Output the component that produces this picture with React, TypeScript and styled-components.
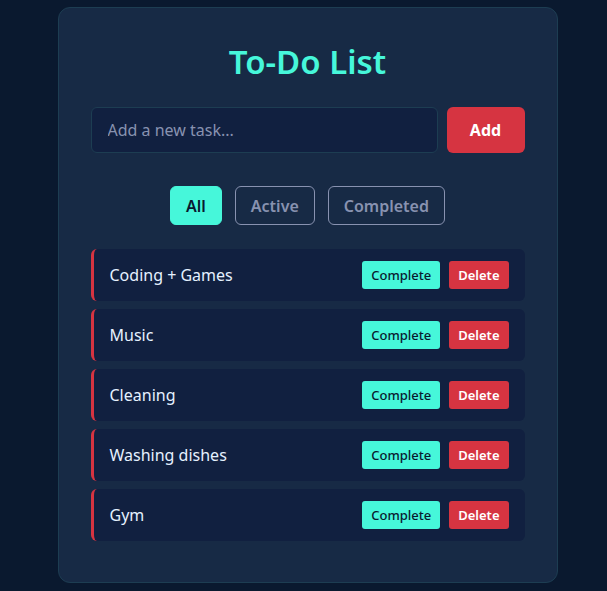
import { useState } from "react";
import styled, { createGlobalStyle } from "styled-components";

const GlobalStyle = createGlobalStyle`
  html, body {
    margin: 0;
    padding: 0;
    background: #0a192f;
  }
  body {
    font-family: "Noto Sans", "Open Sans", sans-serif;
  }
`;

const Page = styled.div`
  min-height: 100vh;
  box-sizing: border-box;
  display: flex;
  justify-content: center;
  align-items: center;
  padding: 7px 0 9px 8px;
  background: #0a192f;
`;

const Card = styled.div`
  width: 500px;
  box-sizing: border-box;
  padding: 32px;
  background: #172a45;
  border: 1px solid #1d3d52;
  border-radius: 12px;
`;

const Title = styled.h1`
  margin: 2px 0 25px;
  text-align: center;
  font-size: 33px;
  line-height: 40px;
  font-weight: 600;
  color: #46f7da;
`;

const InputRow = styled.form`
  display: flex;
  gap: 9px;
`;

const TaskInput = styled.input`
  flex: 1;
  height: 46px;
  box-sizing: border-box;
  padding: 0 16px;
  background: #112040;
  border: 1px solid #1d3d52;
  border-radius: 6px;
  color: #e6f1ff;
  font-family: inherit;
  font-size: 16px;
  outline: none;

  &::placeholder {
    color: #8892b0;
  }
`;

const AddButton = styled.button`
  width: 78px;
  height: 46px;
  border: none;
  border-radius: 6px;
  background: #d63441;
  color: #ffffff;
  font-family: inherit;
  font-size: 16px;
  font-weight: 700;
  cursor: pointer;
`;

const Filters = styled.div`
  display: flex;
  justify-content: center;
  gap: 13px;
  margin: 33px 0 24px;
`;

const FilterButton = styled.button<{ $active: boolean }>`
  height: 39px;
  padding: 0 15px;
  box-sizing: border-box;
  border-radius: 6px;
  border: 1px solid ${(p) => (p.$active ? "#46f7da" : "#8892b0")};
  background: ${(p) => (p.$active ? "#46f7da" : "transparent")};
  color: ${(p) => (p.$active ? "#0a192f" : "#8892b0")};
  font-family: inherit;
  font-size: 16px;
  font-weight: 600;
  cursor: pointer;
`;

const List = styled.ul`
  list-style: none;
  margin: 0;
  padding: 0 0 1px;
`;

const Item = styled.li<{ $done: boolean }>`
  display: flex;
  align-items: center;
  height: 52px;
  box-sizing: border-box;
  margin-bottom: 8px;
  padding: 0 16px;
  background: #112040;
  border-left: 3px solid ${(p) => (p.$done ? "#46f7da" : "#d63441")};
  border-radius: 6px;
`;

const ItemText = styled.span<{ $done: boolean }>`
  flex: 1;
  color: ${(p) => (p.$done ? "#8892b0" : "#e6f1ff")};
  text-decoration: ${(p) => (p.$done ? "line-through" : "none")};
  font-size: 16px;
`;

const Actions = styled.div`
  display: flex;
  gap: 9px;
`;

const SmallButton = styled.button<{ $variant: "complete" | "delete" }>`
  height: 28px;
  padding: 0 9px;
  border: none;
  border-radius: 3px;
  background: ${(p) => (p.$variant === "complete" ? "#46f7da" : "#d63441")};
  color: ${(p) => (p.$variant === "complete" ? "#0a192f" : "#ffffff")};
  font-family: inherit;
  font-size: 13px;
  font-weight: ${(p) => (p.$variant === "complete" ? 500 : 600)};
  cursor: pointer;
`;

type Task = { id: number; text: string; done: boolean };
type Filter = "All" | "Active" | "Completed";

const initialTasks: Task[] = [
  { id: 1, text: "Coding + Games", done: false },
  { id: 2, text: "Music", done: false },
  { id: 3, text: "Cleaning", done: false },
  { id: 4, text: "Washing dishes", done: false },
  { id: 5, text: "Gym", done: false },
];

export default function App() {
  const [tasks, setTasks] = useState<Task[]>(initialTasks);
  const [draft, setDraft] = useState("");
  const [filter, setFilter] = useState<Filter>("All");

  const visible = tasks.filter((t) =>
    filter === "All" ? true : filter === "Active" ? !t.done : t.done
  );

  const addTask = (e: React.FormEvent) => {
    e.preventDefault();
    if (!draft.trim()) return;
    setTasks((ts) => [...ts, { id: Date.now(), text: draft.trim(), done: false }]);
    setDraft("");
  };

  return (
    <Page>
      <GlobalStyle />
      <Card>
        <Title>To-Do List</Title>
        <InputRow onSubmit={addTask}>
          <TaskInput
            value={draft}
            onChange={(e) => setDraft(e.target.value)}
            placeholder="Add a new task..."
          />
          <AddButton type="submit">Add</AddButton>
        </InputRow>
        <Filters>
          {(["All", "Active", "Completed"] as Filter[]).map((f) => (
            <FilterButton key={f} $active={filter === f} onClick={() => setFilter(f)}>
              {f}
            </FilterButton>
          ))}
        </Filters>
        <List>
          {visible.map((t) => (
            <Item key={t.id} $done={t.done}>
              <ItemText $done={t.done}>{t.text}</ItemText>
              <Actions>
                <SmallButton
                  $variant="complete"
                  onClick={() =>
                    setTasks((ts) => ts.map((x) => (x.id === t.id ? { ...x, done: !x.done } : x)))
                  }
                >
                  Complete
                </SmallButton>
                <SmallButton
                  $variant="delete"
                  onClick={() => setTasks((ts) => ts.filter((x) => x.id !== t.id))}
                >
                  Delete
                </SmallButton>
              </Actions>
            </Item>
          ))}
        </List>
      </Card>
    </Page>
  );
}
